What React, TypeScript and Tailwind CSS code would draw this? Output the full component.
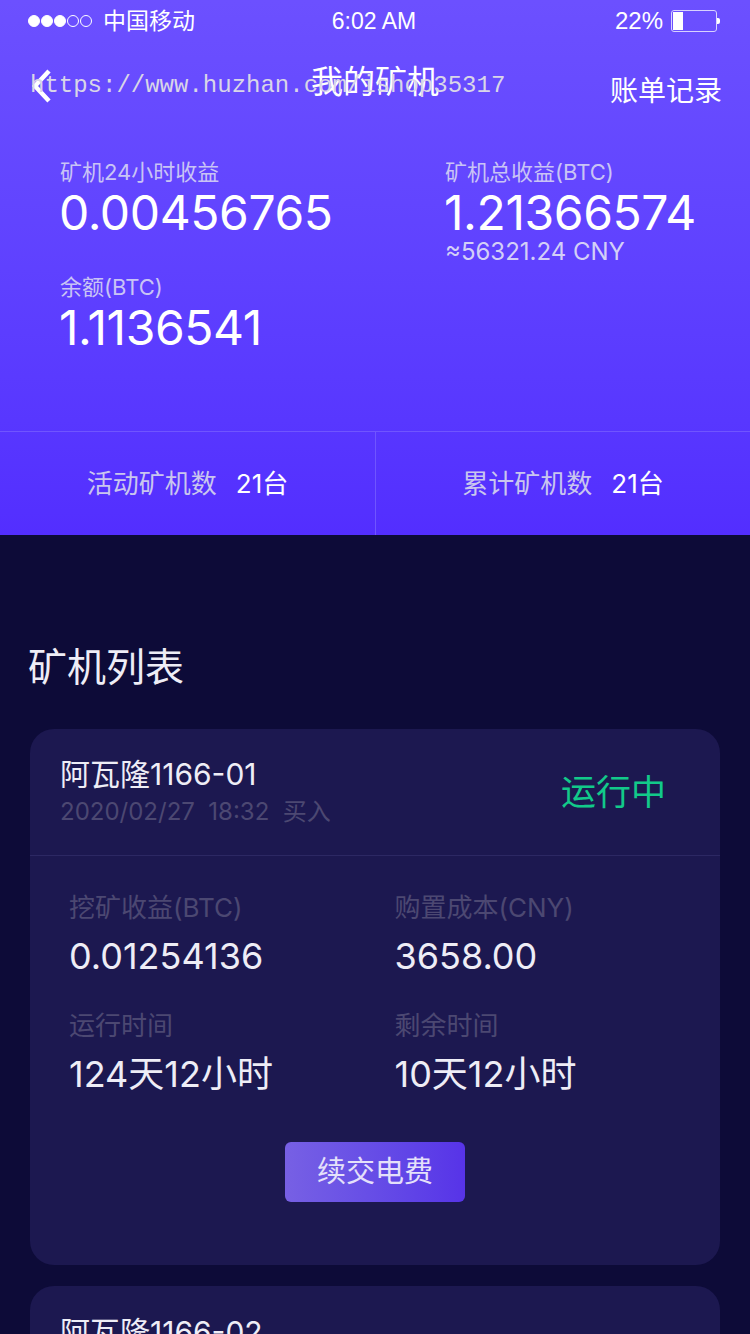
import React from "react";

const font = "font-['Inter','Noto_Sans_CJK_SC',sans-serif]";

function Stat({ label, value, sub, w }: { label: string; value: string; sub?: string; w: string }) {
  return (
    <div className={w}>
      <div className="text-[22px] leading-[30px] text-[#c9c4f5]">{label}</div>
      <div className="text-[48px] leading-[50px] text-white mt-[1px] -ml-[1px] tracking-[-0.4px]">{value}</div>
      {sub ? <div className="text-[24px] leading-[28px] text-[#d3cff7]">{sub}</div> : null}
    </div>
  );
}

function Cell({ label, value }: { label: string; value: string }) {
  return (
    <div className="w-[364px]">
      <div className="text-[26px] leading-[36px] text-[#4c4872]">{label}</div>
      <div className="text-[36px] leading-[44px] text-[#eeedf6] mt-[8px]">{value}</div>
    </div>
  );
}

export default function App() {
  return (
    <div className={`w-[750px] h-[1334px] overflow-hidden bg-[#0d0b38] relative ${font}`}>
      <header className="h-[535px] bg-gradient-to-b from-[#6c50ff] to-[#532eff] relative">
        <div className="h-[42px] flex items-center justify-between pl-[28px] pr-[30px] text-white">
          <div className="flex items-center w-[250px]">
            <div className="flex gap-[1px]">
              {[1, 1, 1, 0, 0].map((f, i) => (
                <span key={i} className={`w-[12px] h-[12px] rounded-full border border-white ${f ? "bg-white" : ""}`} />
              ))}
            </div>
            <span className="text-[23px] ml-[11px] font-['Liberation_Sans','Noto_Sans_CJK_SC',sans-serif]">中国移动</span>
          </div>
          <span className="text-[23px] font-['Liberation_Sans',sans-serif]">6:02 AM</span>
          <div className="flex items-center w-[250px] justify-end">
            <span className="text-[24px] font-['Liberation_Sans',sans-serif]">22%</span>
            <div className="w-[31px] h-[18px] ml-[8px] box-content border border-[#d8d2ff] rounded-[3px] p-[1px] w-[42px] h-[15px]">
              <div className="w-[10px] h-full bg-white" />
            </div>
            <div className="w-[3px] h-[6px] bg-white rounded-r-[2px]" />
          </div>
        </div>
        <div className="h-[88px] flex items-center justify-between relative pl-[30px] pr-[28px]">
          <svg width="24" height="36" viewBox="0 0 24 36" className="mt-[-1px]">
            <path d="M19 3 L5 18 L19 33" fill="none" stroke="#fff" strokeWidth="4.5" />
          </svg>
          <span className="absolute left-0 right-0 text-center text-[32px] text-white top-[18px] leading-[44px]">我的矿机</span>
          <span className="text-[28px] leading-[40px] text-white mt-[10px]">账单记录</span>
        </div>
        <div className="absolute left-[30px] top-[70px] font-['Liberation_Mono',monospace] text-[24px] leading-[32px] text-[#d9d6e8] whitespace-pre">https://www.huzhan.com/ishop35317</div>
        <div className="pl-[60px] pt-[27px]">
          <div className="flex">
            <Stat w="w-[385px]" label="矿机24小时收益" value="0.00456765" />
            <Stat w="w-[300px]" label="矿机总收益(BTC)" value="1.21366574" sub="≈56321.24 CNY" />
          </div>
          <div className="mt-[6px]">
            <Stat w="w-[385px]" label="余额(BTC)" value="1.1136541" />
          </div>
        </div>
        <div className="absolute bottom-0 left-0 right-0 h-[104px] border-t border-[#7055ff] flex">
          <div className="w-[376px] border-r border-[#7055ff] flex items-center justify-center text-[26px]">
            <span className="text-[#c9c6ee]">活动矿机数</span>
            <span className="text-white ml-[19px]">21台</span>
          </div>
          <div className="flex-1 flex items-center justify-center text-[26px]">
            <span className="text-[#c9c6ee]">累计矿机数</span>
            <span className="text-white ml-[19px]">21台</span>
          </div>
        </div>
      </header>

      <main className="px-[30px]">
        <h2 className="text-[39px] leading-[56px] text-[#eeedf6] mt-[104px] -ml-[2px]">矿机列表</h2>
        <section className="mt-[34px] h-[536px] rounded-[24px] bg-[#1c1850]">
          <div className="h-[127px] border-b border-[#2c2863] pl-[30px] pr-[54px] flex items-center justify-between">
            <div>
              <div className="text-[30px] leading-[40px] text-[#eeedf6]">阿瓦隆1166-01</div>
              <div className="text-[24px] leading-[36px] text-[#4c4872] whitespace-pre">2020/02/27  18:32  买入</div>
            </div>
            <span className="text-[35px] text-[#12c98a]">运行中</span>
          </div>
          <div className="pl-[39px] pt-[34px]">
            <div className="flex">
              <Cell label="挖矿收益(BTC)" value="0.01254136" />
              <Cell label="购置成本(CNY)" value="3658.00" />
            </div>
            <div className="flex mt-[30px]">
              <Cell label="运行时间" value="124天12小时" />
              <Cell label="剩余时间" value="10天12小时" />
            </div>
          </div>
          <div className="flex justify-center mt-[46px]">
            <button className="w-[180px] h-[60px] rounded-[6px] bg-gradient-to-r from-[#7760e4] to-[#5733e8] text-[29px] text-[#e4e0fa]">续交电费</button>
          </div>
        </section>
        <section className="mt-[21px] h-[200px] rounded-[24px] bg-[#1c1850] pl-[30px] pr-[54px] pt-[26px] flex justify-between items-start">
          <div className="text-[30px] leading-[40px] text-[#eeedf6]">阿瓦隆1166-02</div>
          <span className="text-[35px] text-[#e8203c] mt-[14px]">已超时</span>
        </section>
      </main>
    </div>
  );
}
